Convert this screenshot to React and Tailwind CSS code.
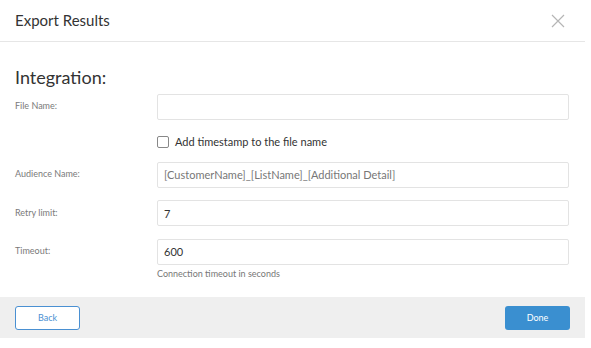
import React from 'react';

function Field({ label, value, placeholder, hint }) {
  return (
    <div className="flex items-start">
      <label className="w-[142px] shrink-0 h-[26px] flex items-center text-[9px] text-[#7a7a7a]">
        {label}
      </label>
      <div className="flex-1">
        <input
          readOnly
          value={value || ''}
          placeholder={placeholder}
          className="w-full h-[26px] border border-[#e3e3e3] rounded-[2px] px-[6px] text-[11px] text-[#333] placeholder:text-[#777] outline-none"
        />
        {hint && <p className="mt-[2px] text-[9px] text-[#777]">{hint}</p>}
      </div>
    </div>
  );
}

export default function App() {
  return (
    <div className="w-[591px] h-[348px] bg-white" style={{ fontFamily: 'Lato, "Noto Sans", sans-serif' }}>
      <div className="w-[585px] bg-white">
        {/* Header */}
        <div className="h-[42px] flex items-center justify-between px-[15px] border-b border-[#e6e6e6]">
          <h1 className="text-[15px] text-[#333]">Export Results</h1>
          <button className="text-[#b5b5b5] mr-[5px]">
            <svg width="14" height="14" viewBox="0 0 14 14" fill="none" stroke="currentColor" strokeWidth="1.2">
              <path d="M1 1L13 13M13 1L1 13" />
            </svg>
          </button>
        </div>

        {/* Body */}
        <div className="pl-[15px] pr-[16px] pt-[23px] pb-[17px]">
          <h2 className="text-[18px] leading-[24px] text-[#333] mb-[4px]">Integration:</h2>
          <div className="flex flex-col">
            <Field label="File Name:" />
            <div className="flex items-center pl-[142px] mt-[14px] mb-[11px]">
              <span className="w-[12px] h-[12px] border border-[#888] rounded-[2px] bg-white" />
              <span className="ml-[6px] text-[11px] text-[#333]">Add timestamp to the file name</span>
            </div>
            <Field label="Audience Name:" placeholder="[CustomerName]_[ListName]_[Additional Detail]" />
            <div className="h-[12px]" />
            <Field label="Retry limit:" value="7" />
            <div className="h-[12px]" />
            <Field label="Timeout:" value="600" hint="Connection timeout in seconds" />
          </div>
        </div>

        {/* Footer */}
        <div className="h-[41px] bg-[#efefef] flex items-center justify-between px-[15px]">
          <button className="w-[65px] h-[24px] border border-[#4a90d2] rounded-[3px] bg-white text-[9px] text-[#4a90d2]">
            Back
          </button>
          <button className="w-[65px] h-[24px] rounded-[3px] bg-[#3a8fd0] text-[9px] text-white">
            Done
          </button>
        </div>
      </div>
    </div>
  );
}
